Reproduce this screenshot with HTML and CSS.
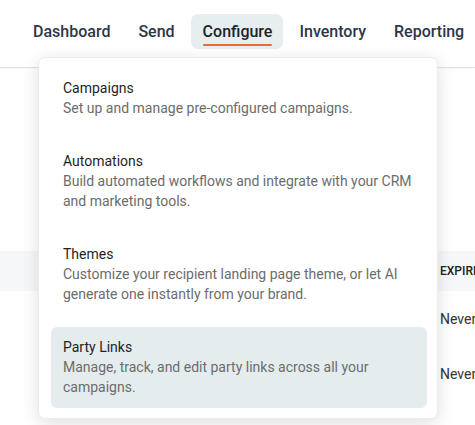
FILE: index.html
```html
<!DOCTYPE html>
<html lang="en">
<head>
    <meta charset="UTF-8">
    <meta name="viewport" content="width=device-width, initial-scale=1.0">
    <title>Configure</title>
    <link rel="stylesheet" href="styles.css">
</head>
<body>
    <header class="topbar">
        <nav class="nav">
            <a class="nav-item">Dashboard</a>
            <a class="nav-item">Send</a>
            <a class="nav-item active"><span class="nav-label">Configure</span></a>
            <a class="nav-item">Inventory</a>
            <a class="nav-item">Reporting</a>
        </nav>
    </header>

    <main class="content">
        <div class="table">
            <div class="row head">
                <div class="cell"></div>
                <div class="cell">EXPIRES</div>
            </div>
            <div class="row">
                <div class="cell"></div>
                <div class="cell">Never</div>
            </div>
            <div class="row">
                <div class="cell"></div>
                <div class="cell">Never</div>
            </div>
        </div>
    </main>

    <!-- Configure dropdown -->
    <div class="dropdown">
        <a class="menu-item">
            <span class="menu-title">Campaigns</span>
            <span class="menu-desc">Set up and manage pre-configured campaigns.</span>
        </a>
        <a class="menu-item">
            <span class="menu-title">Automations</span>
            <span class="menu-desc">Build automated workflows and integrate with your CRM and marketing tools.</span>
        </a>
        <a class="menu-item">
            <span class="menu-title">Themes</span>
            <span class="menu-desc">Customize your recipient landing page theme, or let AI generate one instantly from your brand.</span>
        </a>
        <a class="menu-item hover">
            <span class="menu-title">Party Links</span>
            <span class="menu-desc">Manage, track, and edit party links across all your campaigns.</span>
        </a>
    </div>
</body>
</html>
```

FILE: styles.css
```css
body {
    margin: 0;
    font-family: Roboto, "Liberation Sans", Arial, sans-serif;
    background: #fff;
    color: #2b2b2b;
    overflow: hidden;
}
.topbar {
    height: 67px;
    border-bottom: 1px solid #e2e2e2;
    box-shadow: 0 1px 2px rgba(0, 0, 0, 0.04);
}
.nav {
    display: flex;
    gap: 4px;
    padding: 14px 0 0 21px;
    white-space: nowrap;
}
.nav-item {
    display: block;
    height: 35px;
    line-height: 35px;
    padding: 0 12px;
    font-size: 16px;
    font-weight: 500;
    color: #2d3647;
    border-radius: 7px;
    cursor: pointer;
}
.nav-item.active {
    background-color: #e6eef0;
    color: #1f2328;
    padding-right: 11px;
}
.nav-label {
    display: inline-block;
    position: relative;
}
.nav-label::after {
    content: "";
    position: absolute;
    left: 0;
    right: 0;
    bottom: 3px;
    height: 2px;
    border-radius: 1px;
    background-color: #ec6a2a;
}
.content {
    padding-top: 183px;
}
.row {
    display: grid;
    grid-template-columns: 440px 1fr;
    height: 55px;
    align-items: center;
    font-size: 14px;
    color: #333;
}
.row.head {
    height: 40px;
    background-color: #f6f7f9;
    font-size: 12px;
    font-weight: 500;
    color: #222;
}
.dropdown {
    position: absolute;
    left: 38px;
    top: 57px;
    width: 376px;
    padding: 10px 10px 10px 12px;
    display: flex;
    flex-direction: column;
    gap: 12px;
    background: #fff;
    border: 1px solid #ececec;
    border-radius: 7px;
    box-shadow: 0 4px 18px rgba(0, 0, 0, 0.13);
}
.menu-item {
    display: flex;
    flex-direction: column;
    padding: 10px 12px 11px;
    border-radius: 6px;
    font-size: 14px;
    line-height: 20px;
    cursor: pointer;
}
.menu-item.hover {
    background-color: #e5ecee;
}
.menu-title {
    color: #1f1f1f;
}
.menu-desc {
    color: #6c6c6c;
}
```
